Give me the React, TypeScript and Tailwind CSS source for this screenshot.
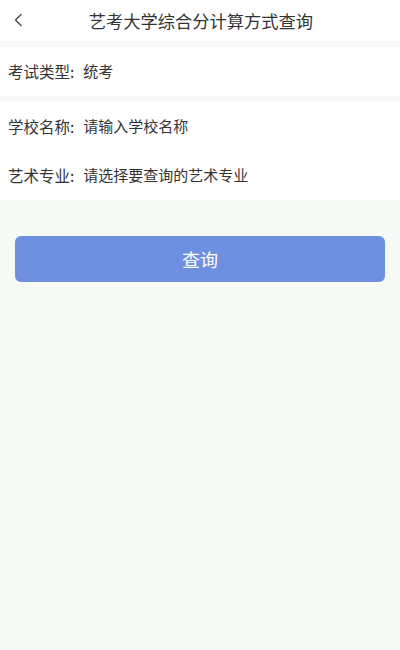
import React from 'react';

const font = { fontFamily: '"Noto Sans CJK SC", "Noto Sans", sans-serif' };

function Row({ label, value }: { label: string; value: string }) {
  return (
    <div className="flex h-[49px] items-center pl-2 text-[15px] text-[#333333]">
      <span className="text-[15.5px]">{label}:</span>
      <span className="ml-[9px]">{value}</span>
    </div>
  );
}

export default function App() {
  return (
    <div className="min-h-[650px] w-[400px] bg-[#f7f9f7]" style={font}>
      <div className="relative flex h-[41px] items-center justify-center bg-white">
        <svg className="absolute left-[13px] top-[13px]" width="10" height="14" viewBox="0 0 10 14" fill="none">
          <path d="M8 1.5 L2.5 7 L8 12.5" stroke="#444" strokeWidth="1.3" strokeLinecap="round" strokeLinejoin="round" />
        </svg>
        <span className="pl-[2px] text-[17.25px] text-[#333333]">艺考大学综合分计算方式查询</span>
      </div>
      <div className="mt-[6px] bg-white">
        <Row label="考试类型" value="统考" />
      </div>
      <div className="mt-[6px] bg-white">
        <Row label="学校名称" value="请输入学校名称" />
        <Row label="艺术专业" value="请选择要查询的艺术专业" />
      </div>
      <div className="px-[15px] pt-[36px]">
        <button className="flex h-[46px] w-full items-center justify-center rounded-[6px] bg-[#6f8fe0] text-[18px] text-white">
          查询
        </button>
      </div>
    </div>
  );
}
